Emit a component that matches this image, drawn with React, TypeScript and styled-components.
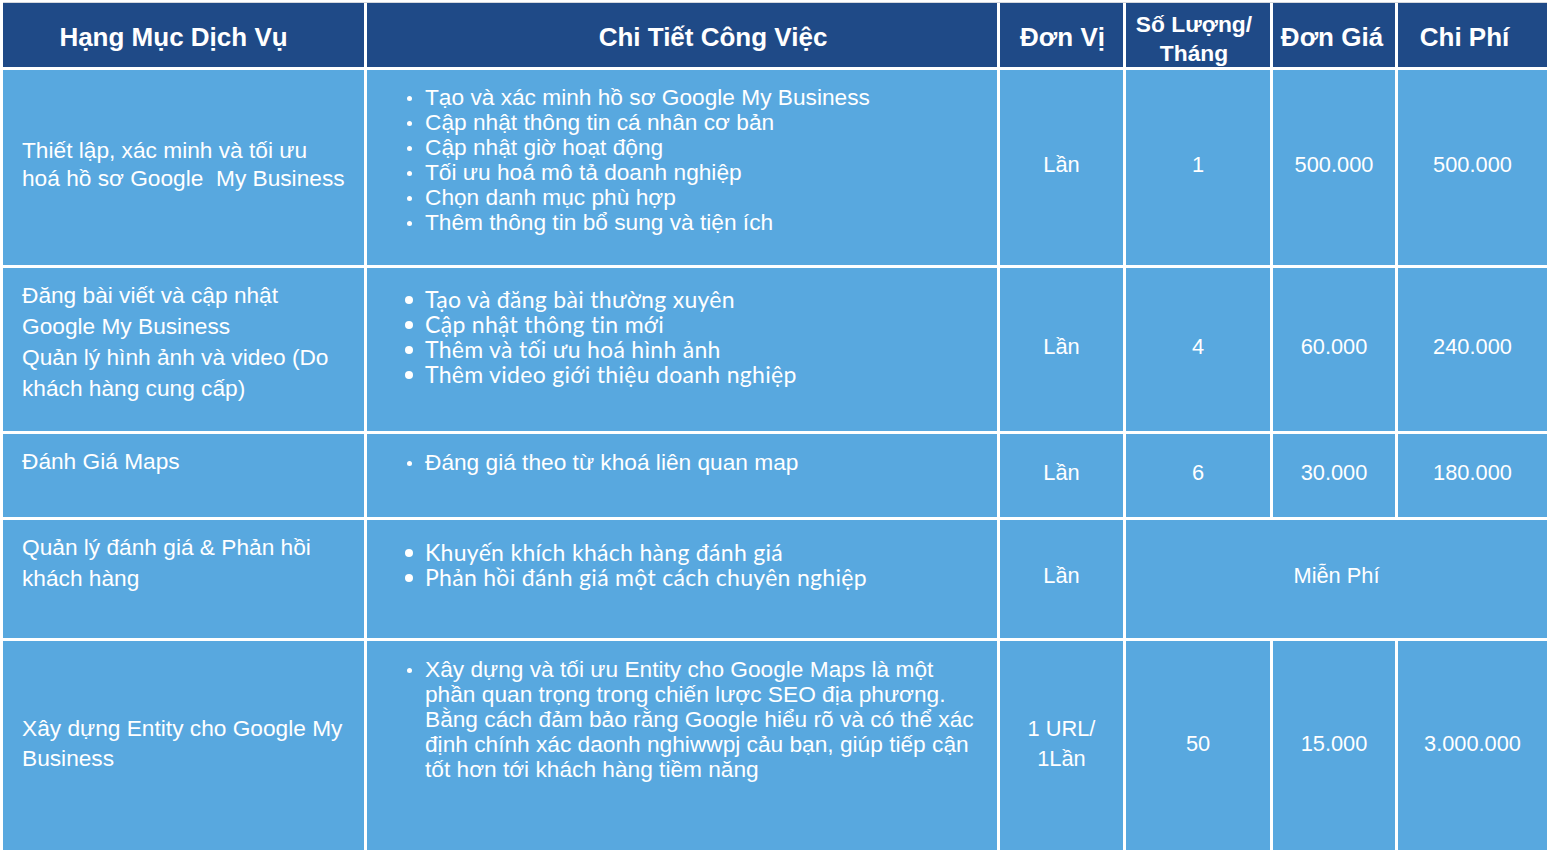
import React from 'react';
import styled, {createGlobalStyle} from "styled-components";

const GlobalStyle = createGlobalStyle`
    html, body {
        margin: 0;
        padding: 0;
        background: #ffffff;
    }
    body {
        font-family: "Liberation Sans", Arial, sans-serif;
    }
`

type Row = {
    service: React.ReactNode;
    serviceAlign: 'top' | 'center';
    serviceLine: number;
    details: string[];
    detailsStyle: 'plain' | 'round';
    unit: React.ReactNode;
    qty?: string;
    price?: string;
    cost?: string;
    free?: string;
    height: number;
    detailTop: number;
};

const headers: { label: React.ReactNode; shift: number; tight?: boolean }[] = [
    {label: 'Hạng Mục Dịch Vụ', shift: -10},
    {label: 'Chi Tiết Công Việc', shift: 31},
    {label: 'Đơn Vị', shift: 1},
    {label: <>Số Lượng/<br/>Tháng</>, shift: -4, tight: true},
    {label: 'Đơn Giá', shift: -2},
    {label: 'Chi Phí', shift: -8},
];

const rows: Row[] = [
    {
        service: <>Thiết lập, xác minh và tối ưu<br/>hoá hồ sơ Google&nbsp; My Business</>,
        serviceAlign: 'center',
        serviceLine: 28,
        details: [
            'Tạo và xác minh hồ sơ Google My Business',
            'Cập nhật thông tin cá nhân cơ bản',
            'Cập nhật giờ hoạt động',
            'Tối ưu hoá mô tả doanh nghiệp',
            'Chọn danh mục phù hợp',
            'Thêm thông tin bổ sung và tiện ích',
        ],
        detailsStyle: 'plain',
        unit: 'Lần', qty: '1', price: '500.000', cost: '500.000',
        height: 195, detailTop: 15,
    },
    {
        service: <>Đăng bài viết và cập nhật<br/>Google My Business<br/>Quản lý hình ảnh và video (Do<br/>khách hàng cung cấp)</>,
        serviceAlign: 'top',
        serviceLine: 31,
        details: [
            'Tạo và đăng bài thường xuyên',
            'Cập nhật thông tin mới',
            'Thêm và tối ưu hoá hình ảnh',
            'Thêm video giới thiệu doanh nghiệp',
        ],
        detailsStyle: 'round',
        unit: 'Lần', qty: '4', price: '60.000', cost: '240.000',
        height: 163, detailTop: 19,
    },
    {
        service: 'Đánh Giá Maps',
        serviceAlign: 'top',
        serviceLine: 31,
        details: ['Đáng giá theo từ khoá liên quan map'],
        detailsStyle: 'plain',
        unit: 'Lần', qty: '6', price: '30.000', cost: '180.000',
        height: 83, detailTop: 16,
    },
    {
        service: <>Quản lý đánh giá &amp; Phản hồi<br/>khách hàng</>,
        serviceAlign: 'top',
        serviceLine: 31,
        details: ['Khuyến khích khách hàng đánh giá', 'Phản hồi đánh giá một cách chuyên nghiệp'],
        detailsStyle: 'round',
        unit: 'Lần', free: 'Miễn Phí',
        height: 118, detailTop: 20,
    },
    {
        service: <>Xây dựng Entity cho Google My<br/>Business</>,
        serviceAlign: 'center',
        serviceLine: 30,
        details: [
            'Xây dựng và tối ưu Entity cho Google Maps là một\nphần quan trọng trong chiến lược SEO địa phương.\nBằng cách đảm bảo rằng Google hiểu rõ và có thể xác\nđịnh chính xác daonh nghiwwpj cảu bạn, giúp tiếp cận\ntốt hơn tới khách hàng tiềm năng',
        ],
        detailsStyle: 'plain',
        unit: <>1 URL/<br/>1Lần</>, qty: '50', price: '15.000', cost: '3.000.000',
        height: 212, detailTop: 16,
    },
];

export default function App() {
    const heights = [64, ...rows.map(r => r.height)].map(h => `${h}px`).join(' ');
    return (
        <>
            <GlobalStyle/>
            <Page>
                <Table style={{gridTemplateRows: heights}}>
                    {headers.map((h, i) => (
                        <HeadCell key={i} $shift={h.shift} $tight={h.tight}>{h.label}</HeadCell>
                    ))}

                    {rows.map((r, i) => (
                        <React.Fragment key={i}>
                            <ServiceCell $align={r.serviceAlign} $line={r.serviceLine}>{r.service}</ServiceCell>
                            <DetailCell $top={r.detailTop}>
                                <DetailList $round={r.detailsStyle === 'round'}>
                                    {r.details.map((d, j) => (
                                        <DetailItem key={j} $round={r.detailsStyle === 'round'}>
                                            <Bullet $round={r.detailsStyle === 'round'}/>
                                            <span>{d}</span>
                                        </DetailItem>
                                    ))}
                                </DetailList>
                            </DetailCell>
                            <ValueCell>{r.unit}</ValueCell>
                            {r.free ? (
                                <ValueCell $span={3}>{r.free}</ValueCell>
                            ) : (
                                <>
                                    <ValueCell>{r.qty}</ValueCell>
                                    <ValueCell>{r.price}</ValueCell>
                                    <ValueCell>{r.cost}</ValueCell>
                                </>
                            )}
                        </React.Fragment>
                    ))}
                </Table>
            </Page>
        </>
    );
}

const Page = styled.div`
    padding: 3px 0 0 3px;
    width: 1547px;
    height: 850px;
    overflow: hidden;
    box-sizing: border-box;
`

const Table = styled.div`
    display: grid;
    grid-template-columns: 361px 630px 123px 144px 122px 149px;
    gap: 3px;
    background: #ffffff;
    border-top: 1px solid #d4d8de;
    margin-top: -1px;
`

const HeadCell = styled.div<{ $tight?: boolean; $shift: number }>`
    background: #1f4a87;
    color: #ffffff;
    font-family: "Liberation Sans", Arial, sans-serif;
    font-weight: 700;
    font-size: ${p => p.$tight ? '22.8px' : '26px'};
    line-height: 29px;
    display: flex;
    align-items: center;
    justify-content: center;
    text-align: center;
    padding-top: ${p => p.$tight ? '8px' : '4px'};
    padding-left: ${p => p.$shift > 0 ? p.$shift * 2 : 0}px;
    padding-right: ${p => p.$shift < 0 ? -p.$shift * 2 : 0}px;
    box-sizing: border-box;
    white-space: nowrap;
`

const BodyCell = styled.div`
    background: #58a8df;
    color: #ffffff;
    font-family: "Liberation Sans", Arial, sans-serif;
    box-sizing: border-box;
`

const ServiceCell = styled(BodyCell)<{ $align: 'top' | 'center'; $line: number }>`
    display: flex;
    align-items: ${p => p.$align === 'center' ? 'center' : 'flex-start'};
    padding: ${p => p.$align === 'center' ? '0 0 8px 19px' : '12px 0 0 19px'};
    font-size: 22.7px;
    line-height: ${p => p.$line}px;
`

const DetailCell = styled(BodyCell)<{ $top: number }>`
    padding: ${p => p.$top}px 0 0 38px;
`

const DetailList = styled.ul<{ $round: boolean }>`
    list-style: none;
    margin: 0;
    padding: 0;
    font-family: ${p => p.$round ? 'Lato, "Noto Sans", sans-serif' : '"Liberation Sans", Arial, sans-serif'};
    font-size: ${p => p.$round ? '23px' : '22.7px'};
    line-height: 25px;
`

const DetailItem = styled.li<{ $round: boolean }>`
    display: flex;
    align-items: flex-start;
    white-space: pre-line;
    letter-spacing: ${p => p.$round ? '0.3px' : '0'};
`

const Bullet = styled.span<{ $round: boolean }>`
    flex: none;
    width: ${p => p.$round ? '8px' : '5px'};
    height: ${p => p.$round ? '8px' : '5px'};
    border-radius: 50%;
    background: #ffffff;
    margin-top: ${p => p.$round ? '9px' : '11px'};
    margin-left: ${p => p.$round ? '0' : '2px'};
    margin-right: ${p => p.$round ? '12px' : '13px'};
`

const ValueCell = styled(BodyCell)<{ $span?: number }>`
    grid-column: ${p => p.$span ? `span ${p.$span}` : 'auto'};
    display: flex;
    align-items: center;
    justify-content: center;
    text-align: center;
    font-size: 21.8px;
    line-height: 30px;
    padding-bottom: 6px;
`
